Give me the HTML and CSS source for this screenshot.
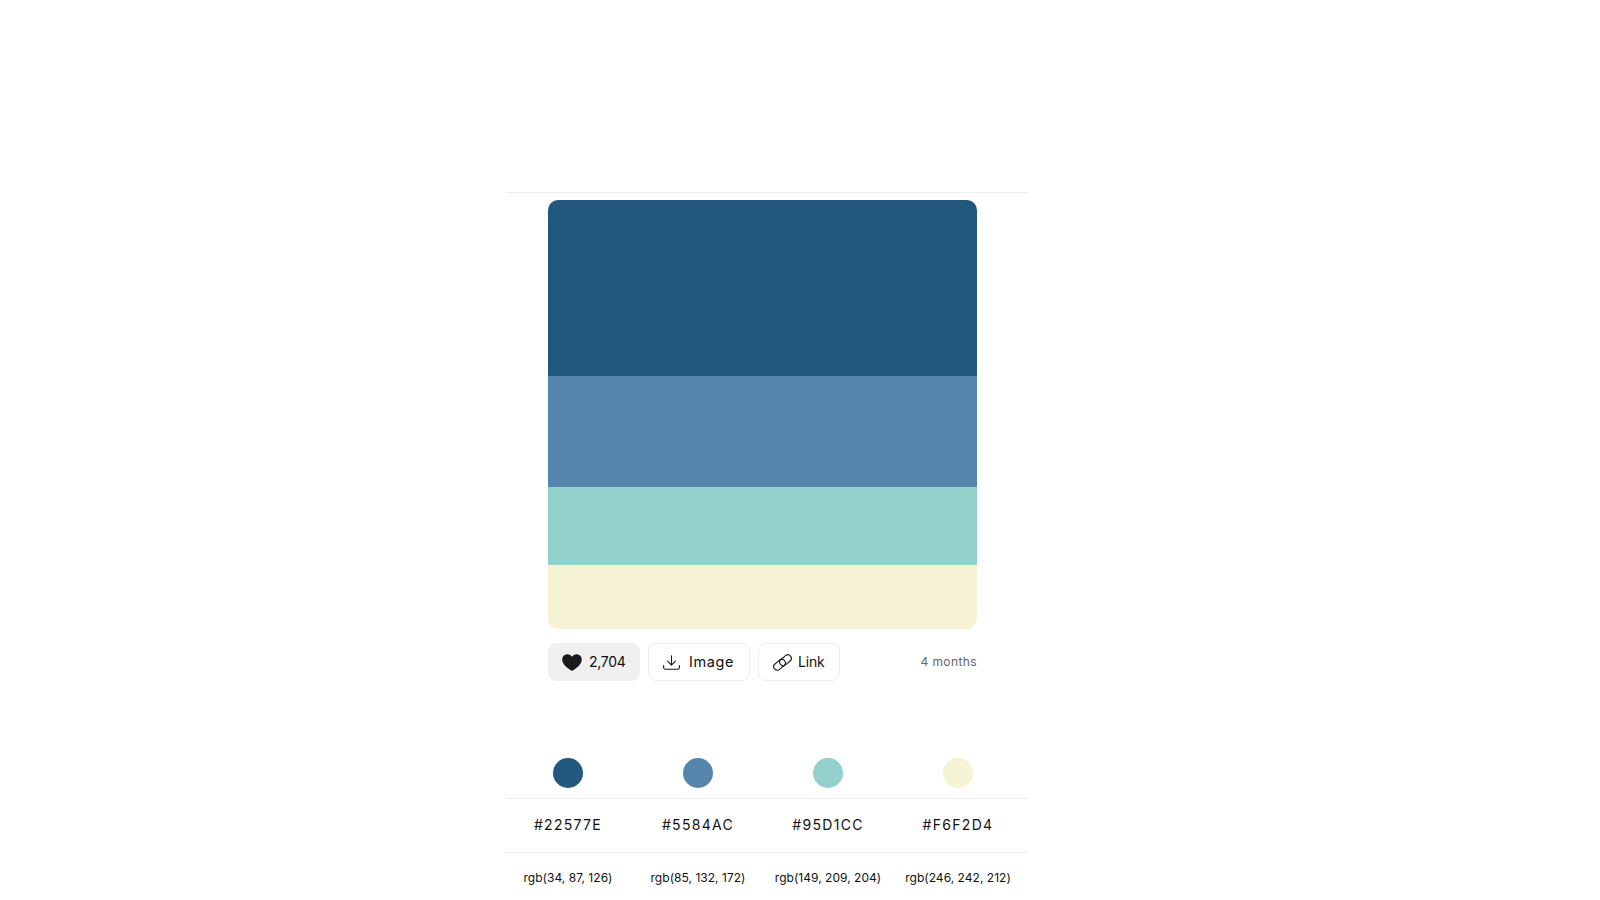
FILE: index.html
```html
<!DOCTYPE html>
<html lang="en">

<head>
    <meta charset="UTF-8">
    <meta name="viewport" content="width=device-width, initial-scale=1.0">
    <title>Color Palette</title>
    <link rel="stylesheet" href="styles.css">
</head>

<body>
    <main class="page">
        <section class="card">
            <div class="palette">
                <div class="band band-1"></div>
                <div class="band band-2"></div>
                <div class="band band-3"></div>
                <div class="band band-4"></div>
            </div>
            <div class="actions">
                <button class="btn btn-like">
                    <svg class="icon-heart" viewBox="0 0 20 17" width="20" height="17">
                        <path d="M10 16.8 C9.4 16.8 8.9 16.5 8.4 16.1 C5.8 14 0.2 10.8 0.2 5.6 C0.2 2.4 2.7 0.3 5.4 0.3 C7.4 0.3 9 1.3 10 2.8 C11 1.3 12.6 0.3 14.6 0.3 C17.3 0.3 19.8 2.4 19.8 5.6 C19.8 10.8 14.2 14 11.6 16.1 C11.1 16.5 10.6 16.8 10 16.8 Z" fill="#1a1a1a" />
                    </svg>
                    <span>2,704</span>
                </button>
                <button class="btn btn-image">
                    <svg class="icon" viewBox="0 0 17 15" width="17" height="15">
                        <path d="M8.5 0.7 V10 M4.6 6.2 L8.5 10.1 L12.4 6.2 M0.6 10.6 V12.6 C0.6 13.6 1.2 14.2 2.2 14.2 H14.8 C15.8 14.2 16.4 13.6 16.4 12.6 V10.6" />
                    </svg>
                    <span>Image</span>
                </button>
                <button class="btn btn-link">
                    <svg class="icon" viewBox="0 0 19 17" width="19" height="17">
                        <rect x="0" y="7.25" width="13" height="7" rx="3.5" transform="rotate(-40 6.5 10.75)" />
                        <rect x="6" y="2.75" width="13" height="7" rx="3.5" transform="rotate(-40 12.5 6.25)" />
                    </svg>
                    <span>Link</span>
                </button>
                <span class="age">4 months</span>
            </div>
        </section>

        <section class="swatches">
            <div class="row row-dots">
                <div class="cell"><span class="dot band-1"></span></div>
                <div class="cell"><span class="dot band-2"></span></div>
                <div class="cell"><span class="dot band-3"></span></div>
                <div class="cell"><span class="dot band-4"></span></div>
            </div>
            <div class="rule"></div>
            <div class="row row-hex">
                <div class="cell">#22577E</div>
                <div class="cell">#5584AC</div>
                <div class="cell">#95D1CC</div>
                <div class="cell">#F6F2D4</div>
            </div>
            <div class="rule"></div>
            <div class="row row-rgb">
                <div class="cell">rgb(34, 87, 126)</div>
                <div class="cell">rgb(85, 132, 172)</div>
                <div class="cell">rgb(149, 209, 204)</div>
                <div class="cell">rgb(246, 242, 212)</div>
            </div>
        </section>
    </main>
</body>

</html>
```

FILE: styles.css
```css
* {
    box-sizing: border-box;
}

html,
body {
    margin: 0;
    height: 900px;
    overflow: hidden;
    background-color: #fff;
}

body {
    font-family: "Inter", "Liberation Sans", sans-serif;
    color: #111;
}

.page {
    width: 522px;
    margin-left: 506px;
    padding-top: 192px;
}

.card {
    border-top: 1px solid #eee;
    padding: 7px 51px 0 42px;
}

.palette {
    height: 429px;
    border-radius: 10px;
    overflow: hidden;
    display: flex;
    flex-direction: column;
}

.band {
    width: 100%;
}

.band-1 {
    background-color: #22577e;
}

.band-2 {
    background-color: #5584ac;
}

.band-3 {
    background-color: #95d1cc;
}

.band-4 {
    background-color: #f6f2d4;
}

.palette .band-1 {
    height: 176px;
}

.palette .band-2 {
    height: 111px;
}

.palette .band-3 {
    height: 78px;
}

.palette .band-4 {
    height: 64px;
}

.actions {
    display: flex;
    align-items: center;
    gap: 8px;
    margin-top: 14px;
}

.btn {
    display: flex;
    align-items: center;
    height: 38px;
    padding: 0 14px;
    font-family: inherit;
    font-size: 14px;
    color: #111;
    background-color: #fff;
    border: 1px solid #eee;
    border-radius: 8px;
}

.btn svg {
    flex-shrink: 0;
}

.btn span {
    padding-bottom: 2px;
}

.btn-like {
    width: 92px;
    padding-left: 13px;
    gap: 7px;
    background-color: #f0f0f0;
    border-color: #f0f0f0;
    letter-spacing: -0.3px;
}

.btn-image {
    gap: 9px;
    padding-right: 15px;
    font-size: 14.5px;
    letter-spacing: 0.6px;
}

.btn-link {
    gap: 6px;
    letter-spacing: -0.2px;
}

.icon {
    fill: none;
    stroke: #1a1a1a;
    stroke-width: 1.1;
    stroke-linecap: round;
    stroke-linejoin: round;
}

.age {
    margin-left: auto;
    padding-bottom: 1px;
    font-size: 12px;
    letter-spacing: 0.4px;
    color: #666;
}

.swatches {
    margin-top: 77px;
}

.row {
    display: grid;
    grid-template-columns: repeat(4, 130px);
    margin-left: -3px;
}

.cell {
    display: flex;
    justify-content: center;
    align-items: center;
}

.row-dots {
    height: 40px;
    align-items: start;
}

.dot {
    width: 30px;
    height: 30px;
    border-radius: 50%;
}

.rule {
    height: 1px;
    background-color: #eee;
}

.row-hex {
    height: 53px;
    padding-bottom: 2px;
    font-size: 14px;
    letter-spacing: 1.3px;
}

.row-rgb {
    height: 48px;
    font-size: 12px;
    letter-spacing: 0.03px;
}
```
